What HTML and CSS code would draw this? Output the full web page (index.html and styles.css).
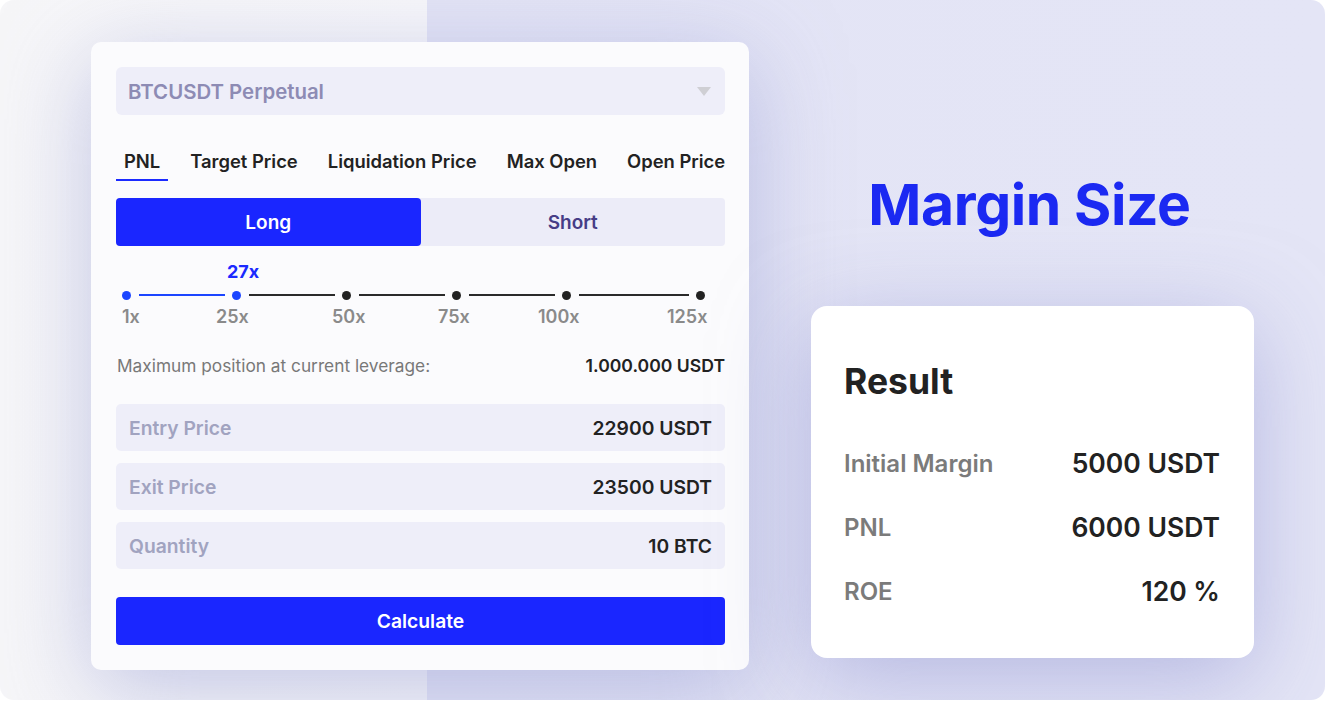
FILE: index.html
```html
<!DOCTYPE html>
<html>
<head>
<meta charset="utf-8">
<link rel="stylesheet" href="styles.css">
</head>
<body>
<div class="frame">
  <div class="calc-card">
    <div class="select">
      <span>BTCUSDT Perpetual</span>
      <svg class="caret" width="14" height="10" viewBox="0 0 14 10"><path d="M0 0h14L7 9z" fill="#cfcfd4"/></svg>
    </div>
    <div class="tabs">
      <div class="tab active">PNL</div>
      <div class="tab">Target Price</div>
      <div class="tab">Liquidation Price</div>
      <div class="tab">Max Open</div>
      <div class="tab">Open Price</div>
    </div>
    <div class="toggle">
      <div class="toggle-btn on">Long</div>
      <div class="toggle-btn">Short</div>
    </div>
    <div class="slider">
      <div class="current">27x</div>
      <div class="track">
        <span class="dot blue"></span><span class="line blue"></span>
        <span class="dot blue"></span><span class="line"></span>
        <span class="dot"></span><span class="line"></span>
        <span class="dot"></span><span class="line"></span>
        <span class="dot"></span><span class="line last"></span>
        <span class="dot"></span>
      </div>
      <div class="marks">
        <span>1x</span><span>25x</span><span>50x</span><span>75x</span><span>100x</span><span>125x</span>
      </div>
    </div>
    <div class="maxpos">
      <span class="mp-label">Maximum position at current leverage:</span>
      <span class="mp-value">1.000.000 USDT</span>
    </div>
    <div class="fields">
      <div class="field"><span class="f-label">Entry Price</span><span class="f-value">22900 USDT</span></div>
      <div class="field"><span class="f-label">Exit Price</span><span class="f-value">23500 USDT</span></div>
      <div class="field"><span class="f-label">Quantity</span><span class="f-value">10 BTC</span></div>
    </div>
    <button class="calc-btn">Calculate</button>
  </div>
  <div class="right">
    <h1 class="title">Margin Size</h1>
    <div class="result-card">
      <h2 class="result-title">Result</h2>
      <div class="r-row"><span class="r-label">Initial Margin</span><span class="r-value">5000 USDT</span></div>
      <div class="r-row"><span class="r-label">PNL</span><span class="r-value">6000 USDT</span></div>
      <div class="r-row"><span class="r-label">ROE</span><span class="r-value">120 %</span></div>
    </div>
  </div>
</div>
</body>
</html>
```
FILE: styles.css
```css
* { box-sizing: border-box; }
html, body { margin: 0; padding: 0; background: #ffffff; }
body { font-family: Inter, "Noto Sans", "Liberation Sans", sans-serif; color: #222; }

.frame {
  width: 1325px;
  height: 700px;
  border-radius: 14px;
  overflow: hidden;
  background: linear-gradient(to right, #f6f6f8 0, #f8f8fa 427px, #e3e4f5 427px, #e4e5f6 100%);
  display: flex;
  align-items: flex-start;
  padding: 42px 0 0 91px;
}

.calc-card {
  width: 658px;
  height: 628px;
  background: #fbfbfd;
  border-radius: 10px;
  padding: 25px 24px 0 25px;
  box-shadow: 0 20px 90px rgba(150, 154, 212, 0.55);
  display: flex;
  flex-direction: column;
}

.select {
  height: 48px;
  background: #eeeef9;
  border-radius: 6px;
  display: flex;
  align-items: center;
  justify-content: space-between;
  padding: 0 14px 0 12px;
  font-size: 20.4px;
  font-weight: 600;
  color: #8d8bb4;
}
.caret { margin-top: 2px; }

.tabs {
  display: flex;
  gap: 14px;
  margin-top: 34px;
  white-space: nowrap;
}
.tab {
  padding: 0 8px 5px;
  font-size: 18.4px;
  font-weight: 600;
  color: #222;
  border-bottom: 2px solid transparent;
  line-height: 25px;
}
.tab.active { border-bottom-color: #1b2aff; }

.toggle {
  display: flex;
  height: 48px;
  margin-top: 17px;
  background: #ececf8;
  border-radius: 4px;
}
.toggle-btn {
  flex: 1;
  display: flex;
  align-items: center;
  justify-content: center;
  font-size: 19px;
  font-weight: 600;
  color: #463d86;
  border-radius: 4px;
}
.toggle-btn.on { background: #1a26ff; color: #fff; }

.slider { margin-top: 15px; }
.current {
  font-size: 18px;
  font-weight: 700;
  color: #1b2aff;
  padding-left: 111px;
  line-height: 22px;
}
.track {
  display: flex;
  align-items: center;
  margin-top: 7px;
  padding-left: 6px;
  height: 10px;
}
.dot {
  width: 9px;
  height: 9px;
  border-radius: 50%;
  background: #222;
  flex: none;
}
.dot.blue { background: #1b45ff; }
.line {
  width: 86px;
  height: 1.5px;
  background: #2a2a2a;
  margin: 0 7px 0 8px;
  flex: none;
}
.line.blue { background: #1b45ff; }
.line.last { width: 110px; }

.marks {
  display: grid;
  grid-template-columns: 94px 116px 106px 100px 129px auto;
  padding-left: 6px;
  margin-top: 6px;
  font-size: 18px;
  font-weight: 600;
  color: #8a8a8a;
  line-height: 22px;
}

.maxpos {
  display: flex;
  justify-content: space-between;
  align-items: center;
  margin-top: 27px;
  padding-left: 1px;
  line-height: 22px;
}
.mp-label { font-size: 17.3px; color: #787878; }
.mp-value { font-size: 17.6px; font-weight: 600; color: #222; }

.fields {
  display: flex;
  flex-direction: column;
  gap: 12px;
  margin-top: 27px;
}
.field {
  height: 47px;
  background: #eeeef9;
  border-radius: 5px;
  display: flex;
  align-items: center;
  justify-content: space-between;
  padding: 0 13px 0 13px;
  font-size: 19.3px;
  font-weight: 600;
}
.f-label { color: #a1a3c0; }
.f-value { color: #222; }

.calc-btn {
  margin-top: 28px;
  height: 48px;
  border: none;
  border-radius: 4px;
  background: #1a26ff;
  color: #fff;
  font-family: inherit;
  font-size: 19.3px;
  font-weight: 600;
  width: 100%;
}

.right {
  margin-left: 62px;
  width: 443px;
  display: flex;
  flex-direction: column;
  align-items: center;
}
.title {
  margin: 126px 0 0 -6px;
  font-size: 57px;
  font-weight: 700;
  color: #1b29f2;
  line-height: 74px;
  letter-spacing: -0.4px;
}
.result-card {
  margin-top: 64px;
  width: 443px;
  height: 352px;
  background: #ffffff;
  border-radius: 16px;
  padding: 51px 33px 0 33px;
  box-shadow: 0 20px 90px rgba(150, 154, 212, 0.6);
}
.result-title {
  margin: 0;
  font-size: 35.5px;
  font-weight: 700;
  color: #222;
  line-height: 50px;
}
.r-row {
  display: flex;
  justify-content: space-between;
  align-items: center;
  height: 64px;
  padding-right: 1px;
}
.r-row:first-of-type { margin-top: 24px; }
.r-label { font-size: 24px; font-weight: 600; color: #7b7b7b; }
.r-value { font-size: 26.5px; font-weight: 600; color: #222; }
```
